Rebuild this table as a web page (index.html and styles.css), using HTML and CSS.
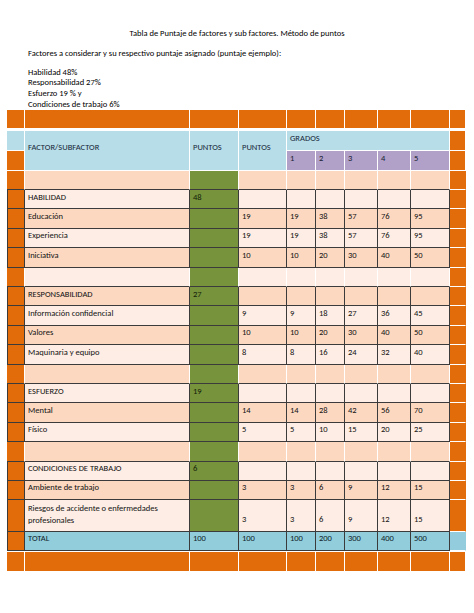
FILE: index.html
```html
<!DOCTYPE html>
<html lang="es">
<head>
<meta charset="utf-8">
<title>Tabla de Puntaje</title>
<link rel="stylesheet" href="styles.css">
</head>
<body>
<div class="page">
  <p class="title">Tabla de Puntaje de factores y sub factores. Método de puntos</p>
  <p class="intro">Factores a considerar y su respectivo puntaje asignado (puntaje ejemplo):</p>
  <p class="list">Habilidad 48%<br>Responsabilidad 27%<br>Esfuerzo 19 % y<br>Condiciones de trabajo 6%</p>

  <table class="sheet">
    <colgroup>
      <col class="w0"><col class="w1"><col class="w2"><col class="w3"><col class="w4"><col class="w5"><col class="w6"><col class="w7"><col class="w8"><col class="w9">
    </colgroup>
    <tr class="top">
      <td class="o"></td><td class="o"></td><td class="o"></td><td class="o"></td><td class="o"></td><td class="o"></td><td class="o"></td><td class="o"></td><td class="o"></td><td class="o"></td>
    </tr>
    <tr class="head">
      <td class="hb"></td>
      <td class="hb mid" rowspan="2">FACTOR/SUBFACTOR</td>
      <td class="hb mid" rowspan="2">PUNTOS</td>
      <td class="hb mid" rowspan="2">PUNTOS</td>
      <td class="hb" colspan="5">GRADOS</td>
      <td class="o"></td>
    </tr>
    <tr class="head">
      <td class="o"></td>
      <td class="pu">1</td><td class="pu">2</td><td class="pu">3</td><td class="pu">4</td><td class="pu">5</td>
      <td class="o"></td>
    </tr>

    <tr class="b d first-blank"><td class="o"></td><td></td><td class="g"></td><td></td><td></td><td></td><td></td><td></td><td></td><td class="o last"></td></tr>
    <tr class="c l"><td class="o first"></td><td>HABILIDAD</td><td class="g">48</td><td></td><td></td><td></td><td></td><td></td><td></td><td class="o last"></td></tr>
    <tr class="c d"><td class="o first"></td><td>Educación</td><td class="g"></td><td>19</td><td>19</td><td>38</td><td>57</td><td>76</td><td>95</td><td class="o last"></td></tr>
    <tr class="c l"><td class="o first"></td><td>Experiencia</td><td class="g"></td><td>19</td><td>19</td><td>38</td><td>57</td><td>76</td><td>95</td><td class="o last"></td></tr>
    <tr class="c d"><td class="o first"></td><td>Iniciativa</td><td class="g"></td><td>10</td><td>10</td><td>20</td><td>30</td><td>40</td><td>50</td><td class="o last"></td></tr>
    <tr class="b l"><td class="o"></td><td></td><td class="g"></td><td></td><td></td><td></td><td></td><td></td><td></td><td class="o last"></td></tr>
    <tr class="c d"><td class="o first"></td><td>RESPONSABILIDAD</td><td class="g">27</td><td></td><td></td><td></td><td></td><td></td><td></td><td class="o last"></td></tr>
    <tr class="c l"><td class="o first"></td><td>Información confidencial</td><td class="g"></td><td>9</td><td>9</td><td>18</td><td>27</td><td>36</td><td>45</td><td class="o last"></td></tr>
    <tr class="c d"><td class="o first"></td><td>Valores</td><td class="g"></td><td>10</td><td>10</td><td>20</td><td>30</td><td>40</td><td>50</td><td class="o last"></td></tr>
    <tr class="c l"><td class="o first"></td><td>Maquinaria y equipo</td><td class="g"></td><td>8</td><td>8</td><td>16</td><td>24</td><td>32</td><td>40</td><td class="o last"></td></tr>
    <tr class="b d"><td class="o"></td><td></td><td class="g"></td><td></td><td></td><td></td><td></td><td></td><td></td><td class="o last"></td></tr>
    <tr class="c l"><td class="o first"></td><td>ESFUERZO</td><td class="g">19</td><td></td><td></td><td></td><td></td><td></td><td></td><td class="o last"></td></tr>
    <tr class="c d"><td class="o first"></td><td>Mental</td><td class="g"></td><td>14</td><td>14</td><td>28</td><td>42</td><td>56</td><td>70</td><td class="o last"></td></tr>
    <tr class="c l"><td class="o first"></td><td>Físico</td><td class="g"></td><td>5</td><td>5</td><td>10</td><td>15</td><td>20</td><td>25</td><td class="o last"></td></tr>
    <tr class="b d"><td class="o"></td><td></td><td class="g"></td><td></td><td></td><td></td><td></td><td></td><td></td><td class="o last"></td></tr>
    <tr class="c l"><td class="o first"></td><td>CONDICIONES DE TRABAJO</td><td class="g">6</td><td></td><td></td><td></td><td></td><td></td><td></td><td class="o last"></td></tr>
    <tr class="c d fixed"><td class="o first"></td><td>Ambiente de trabajo</td><td class="g"></td><td>3</td><td>3</td><td>6</td><td>9</td><td>12</td><td>15</td><td class="o last"></td></tr>
    <tr class="c l tall"><td class="o first"></td><td class="two">Riesgos de accidente o enfermedades profesionales</td><td class="g"></td><td class="bt">3</td><td class="bt">3</td><td class="bt">6</td><td class="bt">9</td><td class="bt">12</td><td class="bt">15</td><td class="o last"></td></tr>
    <tr class="c total"><td class="o first"></td><td>TOTAL</td><td>100</td><td>100</td><td>100</td><td>200</td><td>300</td><td>400</td><td>500</td><td class="last"></td></tr>
    <tr class="bottom">
      <td class="o"></td><td class="o"></td><td class="o"></td><td class="o"></td><td class="o"></td><td class="o"></td><td class="o"></td><td class="o"></td><td class="o"></td><td class="o"></td>
    </tr>
  </table>
</div>
</body>
</html>
```

FILE: styles.css
```css
html, body {
  margin: 0;
  padding: 0;
  background: #ffffff;
}

body {
  font-family: "Carlito", "Lato", "Liberation Sans", sans-serif;
  font-size: 8.5px;
  line-height: 10.67px;
  color: #000000;
}

.page {
  padding-top: 27.7px;
}

.title {
  margin: 0 0 9.3px 0;
  text-align: center;
}

.intro {
  margin: 0 0 8.4px 0;
  padding-left: 28px;
}

.list {
  margin: 0;
  padding-left: 28px;
}

.sheet {
  margin: 0.7px 0 0 7px;
  width: 459px;
  table-layout: fixed;
  border-collapse: separate;
  border-spacing: 0;
}

.w0 { width: 18px; }
.w1 { width: 165px; }
.w2 { width: 49px; }
.w3 { width: 48px; }
.w4 { width: 29px; }
.w5 { width: 29px; }
.w6 { width: 33px; }
.w7 { width: 33px; }
.w8 { width: 39px; }
.w9 { width: 16px; }

.sheet td {
  padding: 1.5px 2px 0 3px;
  vertical-align: top;
  border-right: 1px solid #ffffff;
  border-bottom: 1px solid #ffffff;
  white-space: nowrap;
  overflow: hidden;
  color: #111111;
}

.sheet tr { height: 19.4px; }
.sheet tr.top { height: 21px; }
.sheet tr.top td { border-bottom-width: 3.5px; }
.sheet tr.head { height: 20px; }
.sheet tr.first-blank { height: 19px; }
.sheet tr.fixed { height: 19px; }
.sheet tr.tall { height: 32px; }
.sheet tr.total { height: 19px; }
.sheet tr.bottom { height: 20px; }
.sheet tr.bottom td { border-top: 1px solid #ffffff; border-bottom: 0; }

/* peach banding */
.sheet tr.d td { background: #fcd8c1; }
.sheet tr.l td { background: #fdede4; }
.sheet tr.total td { background: #92cddc; color: #0e1c28; }

/* header */
.sheet tr td.hb { background: #b7dde8; color: #17283a; }
.sheet tr td.pu { background: #b1a0c7; color: #161c30; }
.sheet td.mid { vertical-align: middle; padding-bottom: 8px; }

/* fixed column colours */
.sheet tr td.o { background: #e36c0a; }
.sheet tr td.g { background: #77933c; color: #121c08; }
.sheet tr.total td.last { background: #93cddd; }

/* dark grid for content rows */
.sheet tr.c td { border-right-color: #3b3b3b; border-bottom-color: #3b3b3b; }
.sheet tr.b td { border-bottom-color: #3b3b3b; }
.sheet tr.c td.first { border-left: 1px solid #3b3b3b; }
.sheet tr.c td.last,
.sheet tr.b td.last { border-right-color: transparent; border-bottom-color: #ffffff; }

.sheet td.two {
  white-space: normal;
  line-height: 12px;
  padding-top: 2px;
}

.sheet td.bt {
  vertical-align: bottom;
  padding-bottom: 6.5px;
}
```
